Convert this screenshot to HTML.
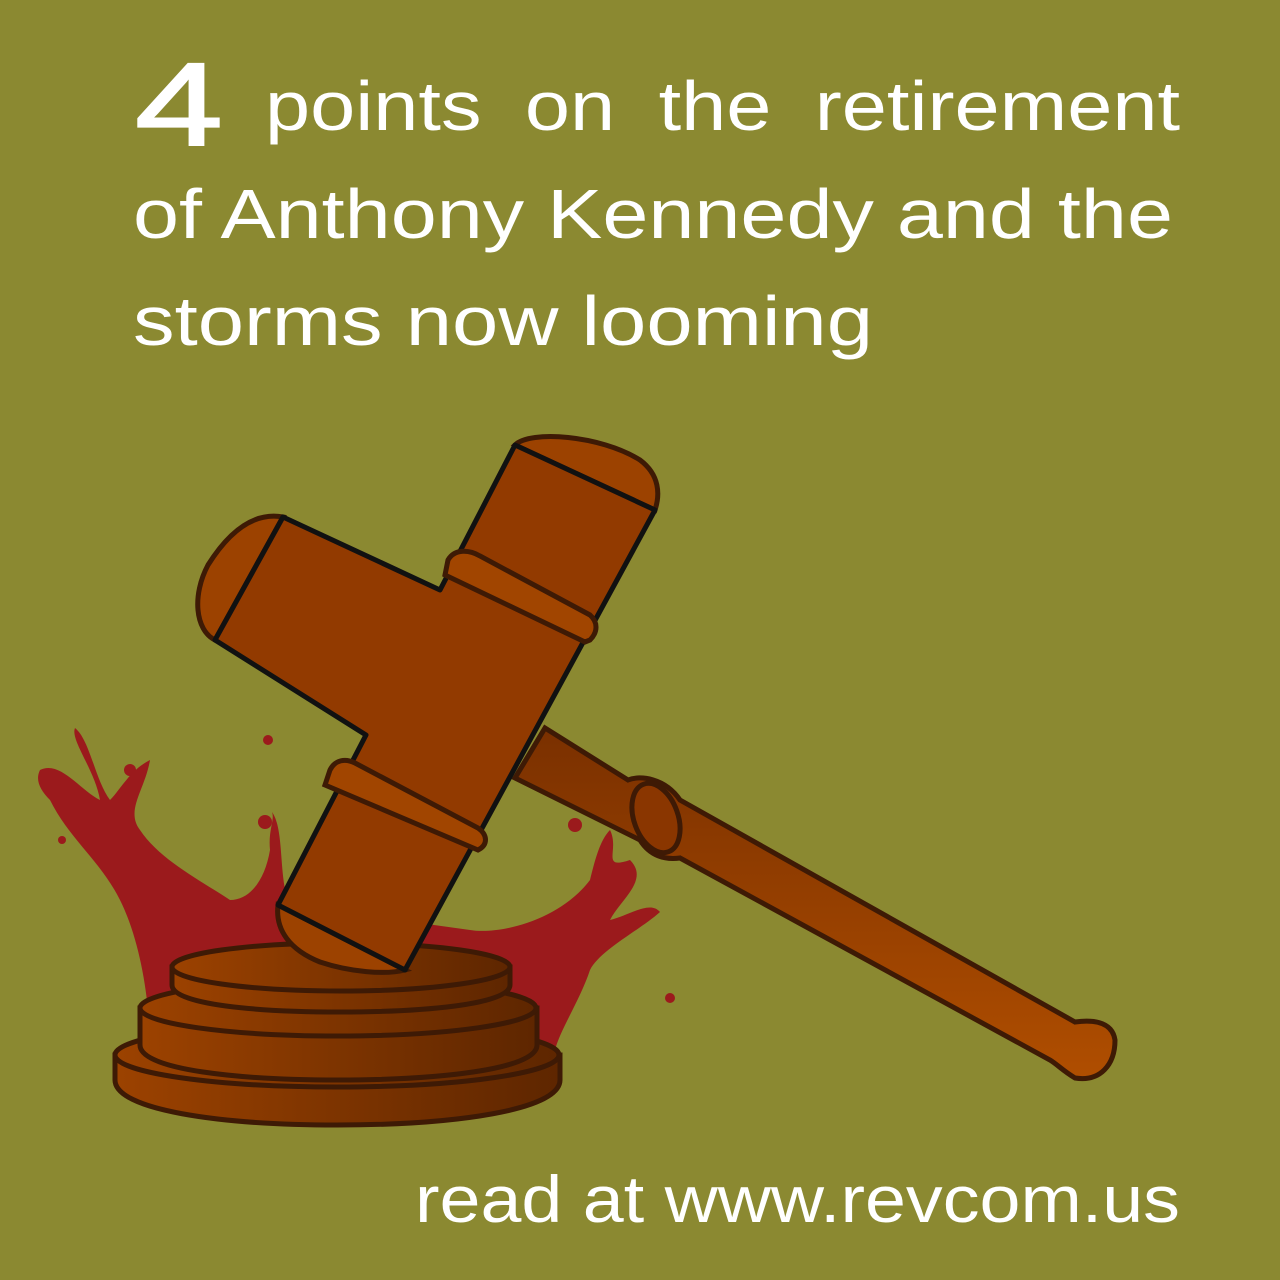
<!DOCTYPE html>
<html><head><meta charset="utf-8"><style>
html,body{margin:0;padding:0;background:#8b8931;}
svg{display:block}
</style></head><body>
<svg width="1280" height="1280" viewBox="0 0 1280 1280" xmlns="http://www.w3.org/2000/svg">
<defs>
<linearGradient id="wood" x1="0" y1="0" x2="1" y2="0"><stop offset="0" stop-color="#9c4200"/><stop offset="1" stop-color="#5e2600"/></linearGradient>
<linearGradient id="hd" x1="0" y1="0" x2="0" y2="1"><stop offset="0" stop-color="#7a3000"/><stop offset="1" stop-color="#b04e00"/></linearGradient>
</defs>
<rect width="1280" height="1280" fill="#8b8931"/>
<g font-family="'Liberation Sans',sans-serif" fill="#ffffff">
<text x="135" y="145" font-size="118" textLength="88" lengthAdjust="spacingAndGlyphs" stroke="#fff" stroke-width="2">4</text>
<text x="265" y="130" font-size="70" textLength="915" lengthAdjust="spacingAndGlyphs" word-spacing="18">points on the retirement</text>
<text x="133" y="238" font-size="70" textLength="1040" lengthAdjust="spacingAndGlyphs">of Anthony Kennedy and the</text>
<text x="133" y="345" font-size="70" textLength="740" lengthAdjust="spacingAndGlyphs">storms now looming</text>
<text x="415" y="1222" font-size="66" textLength="765" lengthAdjust="spacingAndGlyphs">read at www.revcom.us</text>
</g>
<!-- blood -->
<g fill="#9b1a1c">
<path d="M40,770 C60,760 80,790 100,800 C95,770 70,740 75,728 C90,740 95,780 110,800 C120,790 130,770 150,760 C145,790 125,810 140,830 C160,860 200,880 230,900 C250,900 265,880 270,850 C268,830 275,820 272,812 C285,830 278,880 290,905 L470,930 C500,935 560,920 590,880 C595,860 600,840 610,830 C620,850 600,870 630,860 C650,880 620,900 610,920 C630,915 650,900 660,912 C640,930 600,950 590,970 C580,1000 560,1030 555,1050 L150,1050 C150,1000 140,940 120,900 C100,860 70,840 50,800 C40,790 35,780 40,770Z"/>
<circle cx="268" cy="740" r="5"/><circle cx="265" cy="822" r="7"/><circle cx="575" cy="825" r="7"/><circle cx="670" cy="998" r="5"/><circle cx="62" cy="840" r="4"/><circle cx="130" cy="770" r="6"/>
</g>
<!-- handle -->
<path d="M545,728 L628,780 C640,775 665,778 680,800 L1075,1022 C1090,1020 1112,1020 1115,1040 C1115,1065 1100,1082 1075,1078 C1062,1070 1058,1065 1050,1060 L680,858 C665,860 650,856 640,840 L515,778 Z" fill="url(#hd)" stroke="#3e1a05" stroke-width="5"/>
<ellipse cx="656" cy="818" rx="22" ry="36" transform="rotate(-20 656 818)" fill="#8a3600" stroke="#3e1a05" stroke-width="5"/>
<!-- base -->
<g stroke="#3e1a05" stroke-width="5" fill="url(#wood)">
<path d="M115,1055 L115,1080 C115,1110 220,1125 337,1125 C455,1125 560,1110 560,1080 L560,1055 Z"/>
<ellipse cx="337" cy="1055" rx="222" ry="32"/>
<path d="M140,1008 L140,1045 C140,1070 240,1080 338,1080 C435,1080 537,1070 537,1045 L537,1008 Z"/>
<ellipse cx="338" cy="1008" rx="198" ry="28"/>
<path d="M172,967 L172,985 C172,1005 260,1012 340,1012 C420,1012 510,1005 510,985 L510,967 Z"/>
<ellipse cx="341" cy="967" rx="169" ry="24"/>
</g>
<!-- head caps -->
<g fill="#9c4200" stroke="#3e1a05" stroke-width="5">
<path d="M515,445 C530,430 600,435 640,460 C660,475 660,495 655,510 Z"/>
<path d="M283,517 C255,512 230,530 208,565 C192,595 195,630 215,640 Z"/>
<path d="M278,905 C275,930 290,950 320,962 C350,972 385,975 405,970 Z"/>
</g>
<!-- head -->
<polygon points="515,445 655,510 405,970 278,905 366,735 215,640 283,517 440,590" fill="#923a00" stroke="#111" stroke-width="5" stroke-linejoin="round"/>
<g fill="#a14500" stroke="#3e1a05" stroke-width="5">
<path d="M448,560 C455,548 470,550 480,556 L590,615 C598,622 598,632 590,640 L585,642 L445,575 Z"/>
<path d="M330,770 C335,760 345,758 355,763 L478,828 C488,835 488,845 478,850 L325,785 Z"/>
</g>
</svg>
</body></html>
